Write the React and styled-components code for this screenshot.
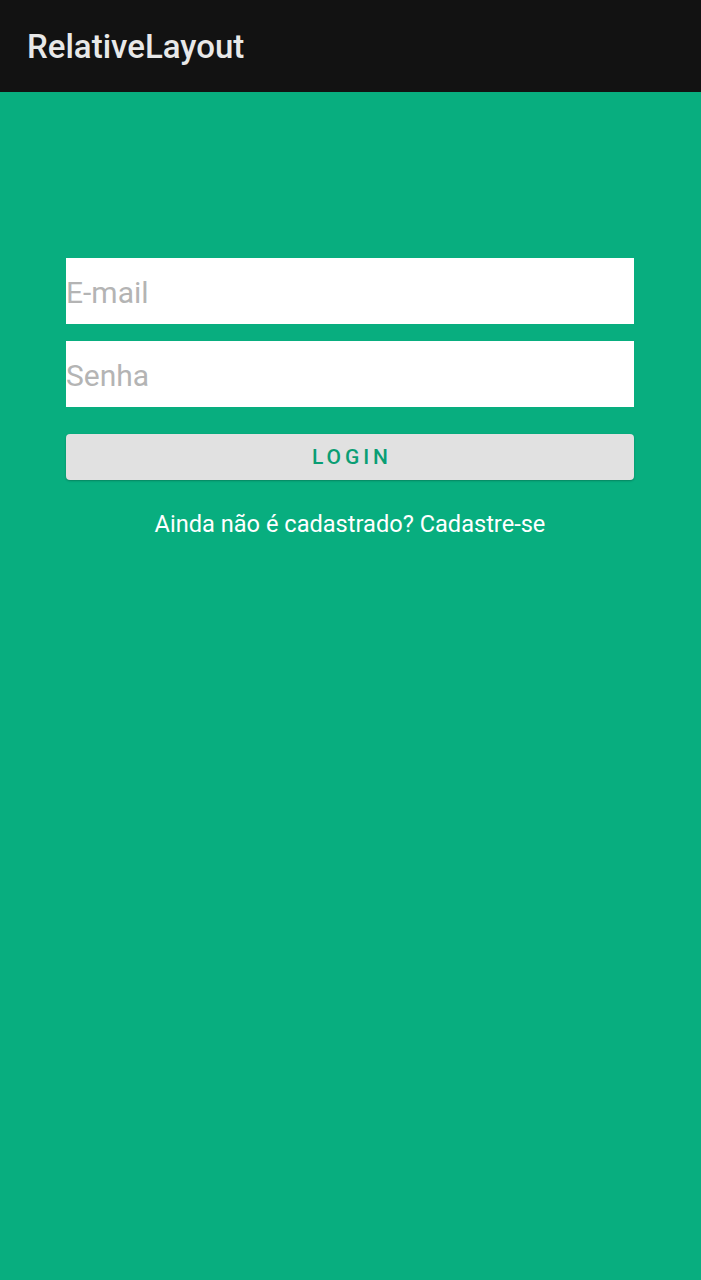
import React from "react";
import styled, { createGlobalStyle } from "styled-components";

const Global = createGlobalStyle`
  html, body { margin: 0; padding: 0; }
  body { font-family: Roboto, "Noto Sans", sans-serif; background: #08ae7f; }
  * { box-sizing: border-box; }
`;

const Screen = styled.div`
  width: 701px;
  height: 1280px;
  display: flex;
  flex-direction: column;
  background: #08ae7f;
`;

const AppBar = styled.header`
  height: 92px;
  background: #121212;
  display: flex;
  align-items: center;
  padding-left: 27px;
  flex-shrink: 0;
`;

const Title = styled.h1`
  margin: 0;
  font-family: Roboto, sans-serif;
  font-weight: 500;
  font-size: 33px;
  color: #e8e8e8;
  letter-spacing: 0;
  padding-top: 1px;
`;

const Form = styled.form`
  display: flex;
  flex-direction: column;
  padding: 166px 67px 0 66px;
`;

const Field = styled.input`
  height: 66px;
  border: none;
  outline: none;
  background: #ffffff;
  padding: 2px 0 0 0;
  font-family: Roboto, sans-serif;
  font-size: 30px;
  color: #333;
  margin-bottom: ${(p) => p.$gap || 0}px;
  &::placeholder { color: #b4b4b4; }
`;

const Button = styled.button`
  height: 46px;
  margin-top: 27px;
  border: none;
  border-radius: 4px;
  background: #e1e1e1;
  box-shadow: 0 1px 2px rgba(0, 0, 0, 0.25);
  font-family: Roboto, sans-serif;
  font-weight: 500;
  font-size: 21px;
  letter-spacing: 3.9px;
  text-indent: 3.9px;
  color: #0a9e74;
  padding: 0;
`;

const SignUp = styled.p`
  margin: 30px 0 0;
  text-align: center;
  font-family: Roboto, sans-serif;
  font-size: 23.6px;
  color: #ffffff;
`;

export default function App() {
  return (
    <>
      <Global />
      <Screen>
        <AppBar>
          <Title>RelativeLayout</Title>
        </AppBar>
        <Form onSubmit={(e) => e.preventDefault()}>
          <Field placeholder="E-mail" $gap={17} />
          <Field placeholder="Senha" type="password" />
          <Button type="submit">LOGIN</Button>
          <SignUp>Ainda não é cadastrado? Cadastre-se</SignUp>
        </Form>
      </Screen>
    </>
  );
}
